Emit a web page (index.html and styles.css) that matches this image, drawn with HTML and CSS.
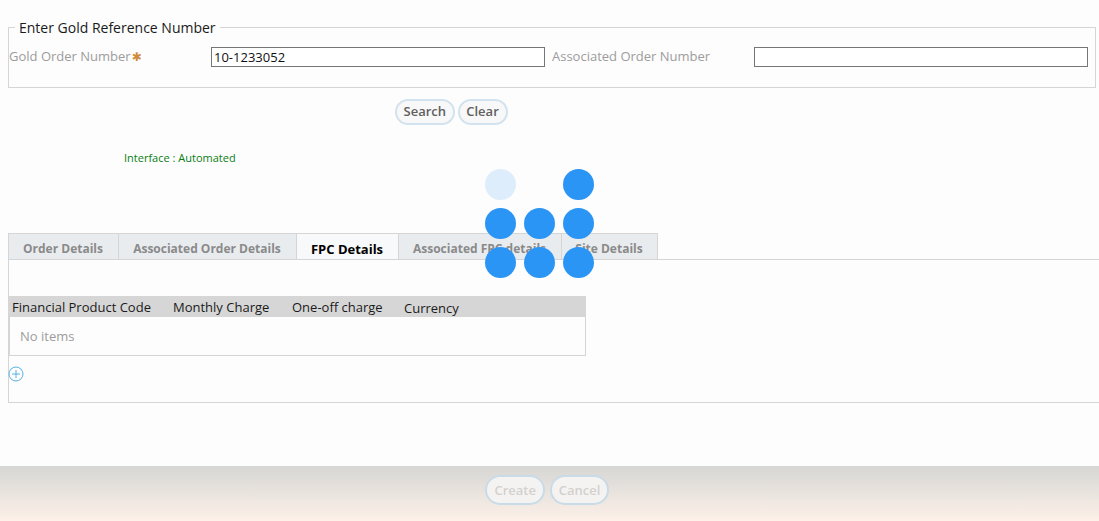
FILE: index.html
```html
<!DOCTYPE HTML>
<html>
	<head>
		<meta charset="utf-8">
		<title>Enter Gold Reference Number</title>
		<link rel="stylesheet" href="styles.css">
	</head>

	<body>
		<div id="main">
			<fieldset class="ref-box">
				<legend>Enter Gold Reference Number</legend>
				<div class="ref-row">
					<label class="ref-label">Gold Order Number<span class="req">&#10033;</span></label>
					<input class="ref-input" type="text" value="10-1233052">
					<label class="ref-label ref-label-2">Associated Order Number</label>
					<input class="ref-input" type="text">
				</div>
			</fieldset>

			<div class="search-btns">
				<button class="btn" type="button">Search</button>
				<button class="btn btn-clear" type="button">Clear</button>
			</div>

			<div class="interface">Interface : Automated</div>

			<div class="tabs">
				<div class="tab tab-1">Order Details</div>
				<div class="tab tab-2">Associated Order Details</div>
				<div class="tab tab-3 active">FPC Details</div>
				<div class="tab tab-4">Associated FPC details</div>
				<div class="tab tab-5">Site Details</div>
			</div>
			<div class="panel">
				<div class="grid">
					<div class="grid-head">
						<span class="col-1">Financial Product Code</span>
						<span class="col-2">Monthly Charge</span>
						<span class="col-3">One-off charge</span>
						<span class="col-4">Currency</span>
					</div>
					<div class="grid-empty">No items</div>
				</div>
				<svg class="add-icon" width="16" height="16" viewBox="0 0 16 16">
					<circle cx="8" cy="8" r="7" fill="none" stroke="#57afe6"/>
					<path d="M8 4v8M4 8h8" fill="none" stroke="#57afe6"/>
				</svg>
			</div>
		</div>

		<div id="footer">
			<button class="btn btn-off btn-create" type="button">Create</button>
			<button class="btn btn-off" type="button">Cancel</button>
		</div>

		<div id="loader">
			<i class="dot dot-faint"></i><i class="dot-gap"></i><i class="dot"></i>
			<i class="dot"></i><i class="dot"></i><i class="dot"></i>
			<i class="dot"></i><i class="dot"></i><i class="dot"></i>
		</div>
	</body>
</html>
```

FILE: styles.css
```css
html, body {
	margin: 0;
	height: 100%;
}

body {
	position: relative;
	height: 521px;
	overflow: hidden;
	display: flex;
	flex-direction: column;
	background-color: #fdfdfd;
	font-family: "Open Sans", sans-serif;
	font-size: 14px;
	color: #000;
}

#main {
	flex: 1;
	padding: 19px 0 0 8px;
}

.ref-box {
	margin: 0 3px 0 0;
	padding: 0;
	height: 69px;
	box-sizing: border-box;
	border: 1px solid #d5d5d5;
}
.ref-box legend {
	margin-left: 6px;
	padding: 0 4px;
	line-height: 17px;
	font-size: 14px;
	color: #1a1a1a;
}

.ref-row {
	display: flex;
	align-items: center;
	padding-top: 11px;
	height: 20px;
}
.ref-label {
	width: 202px;
	flex-shrink: 0;
	color: #9c9c9c;
	font-size: 13px;
	position: relative;
	top: -1px;
}
.ref-label-2 {
	width: 202px;
	margin-left: 7px;
}
.req {
	color: #d08a3c;
	font-family: "DejaVu Sans", sans-serif;
	margin-left: 1px;
	font-size: 12px;
	line-height: 14px;
}
.ref-input {
	width: 334px;
	height: 20px;
	box-sizing: border-box;
	margin: 0;
	padding: 0 2px;
	border: 1px solid #767676;
	background: #fff;
	font-family: "Open Sans", sans-serif;
	font-size: 13px;
	color: #111;
	border-radius: 0;
	outline: none;
}

.search-btns {
	display: flex;
	gap: 3px;
	padding: 11px 0 0 387px;
}
.search-btns .btn {
	padding-bottom: 2px;
}

.btn {
	height: 26px;
	padding: 0 6.5px;
	box-sizing: border-box;
	background: #f8f8f8;
	border: 2px solid #d2e2ee;
	border-radius: 13px;
	font-family: "Open Sans", sans-serif;
	font-size: 13px;
	font-weight: 600;
	color: #5f5f5f;
}
.btn-clear {
	width: 50px;
}

.interface {
	margin: 26px 0 0 116px;
	font-size: 11px;
	line-height: 14px;
	color: #0a7d15;
}

.tabs {
	display: flex;
	margin-top: 68px;
}
.tab {
	height: 27px;
	box-sizing: border-box;
	padding: 6px 1px 0 0;
	background: #e9ecef;
	border: 1px solid #d5d5d5;
	border-left-width: 0;
	text-align: center;
	font-size: 12px;
	line-height: 18px;
	font-weight: 700;
	color: #8a8a8a;
}
.tab-1 { width: 111px; border-left-width: 1px; }
.tab-2 { width: 178px; }
.tab-3 { width: 102px; }
.tab-4 { width: 163px; }
.tab-5 { width: 96px; }
.tab.active {
	background: #f8f9fa;
	color: #000;
	font-size: 13px;
}

.panel {
	margin-top: -1px;
	height: 144px;
	box-sizing: border-box;
	padding-top: 36px;
	border: 1px solid #d5d5d5;
	border-right: 0;
}

.grid {
	width: 577px;
	height: 60px;
	box-sizing: border-box;
	border: 1px solid #d5d5d5;
	border-top: 0;
}
.grid-head {
	display: flex;
	height: 21px;
	margin-left: -1px;
	margin-right: -1px;
	background: #d6d6d6;
	font-size: 13px;
	line-height: 23px;
	color: #1a1a1a;
}
.col-1 { margin-left: 3px; width: 161px; }
.col-2 { width: 119px; }
.col-3 { width: 112px; }
.col-4 { position: relative; top: 1px; }
.grid-empty {
	padding: 10px 0 0 10px;
	font-size: 13px;
	line-height: 18px;
	color: #9c9c9c;
}

.add-icon {
	display: block;
	margin: 10px 0 0 -1px;
}

#footer {
	height: 55px;
	box-sizing: border-box;
	display: flex;
	gap: 5px;
	justify-content: center;
	align-items: flex-start;
	padding: 9px 5px 0 0;
	background: linear-gradient(#d6d6d4, #fdf1e8);
}
.btn-off {
	height: 30px;
	border-radius: 15px;
	background: #f4f3f2;
	color: #d5d0ce;
	border-color: #c8dbe8;
}
.btn-create {
	width: 60px;
}

#loader {
	position: absolute;
	left: 485px;
	top: 169px;
	display: grid;
	grid-template-columns: repeat(3, 31px);
	grid-auto-rows: 31px;
	gap: 8px;
}
.dot {
	border-radius: 50%;
	background: #2b95f5;
}
.dot-faint {
	background: #deedfc;
}
```
